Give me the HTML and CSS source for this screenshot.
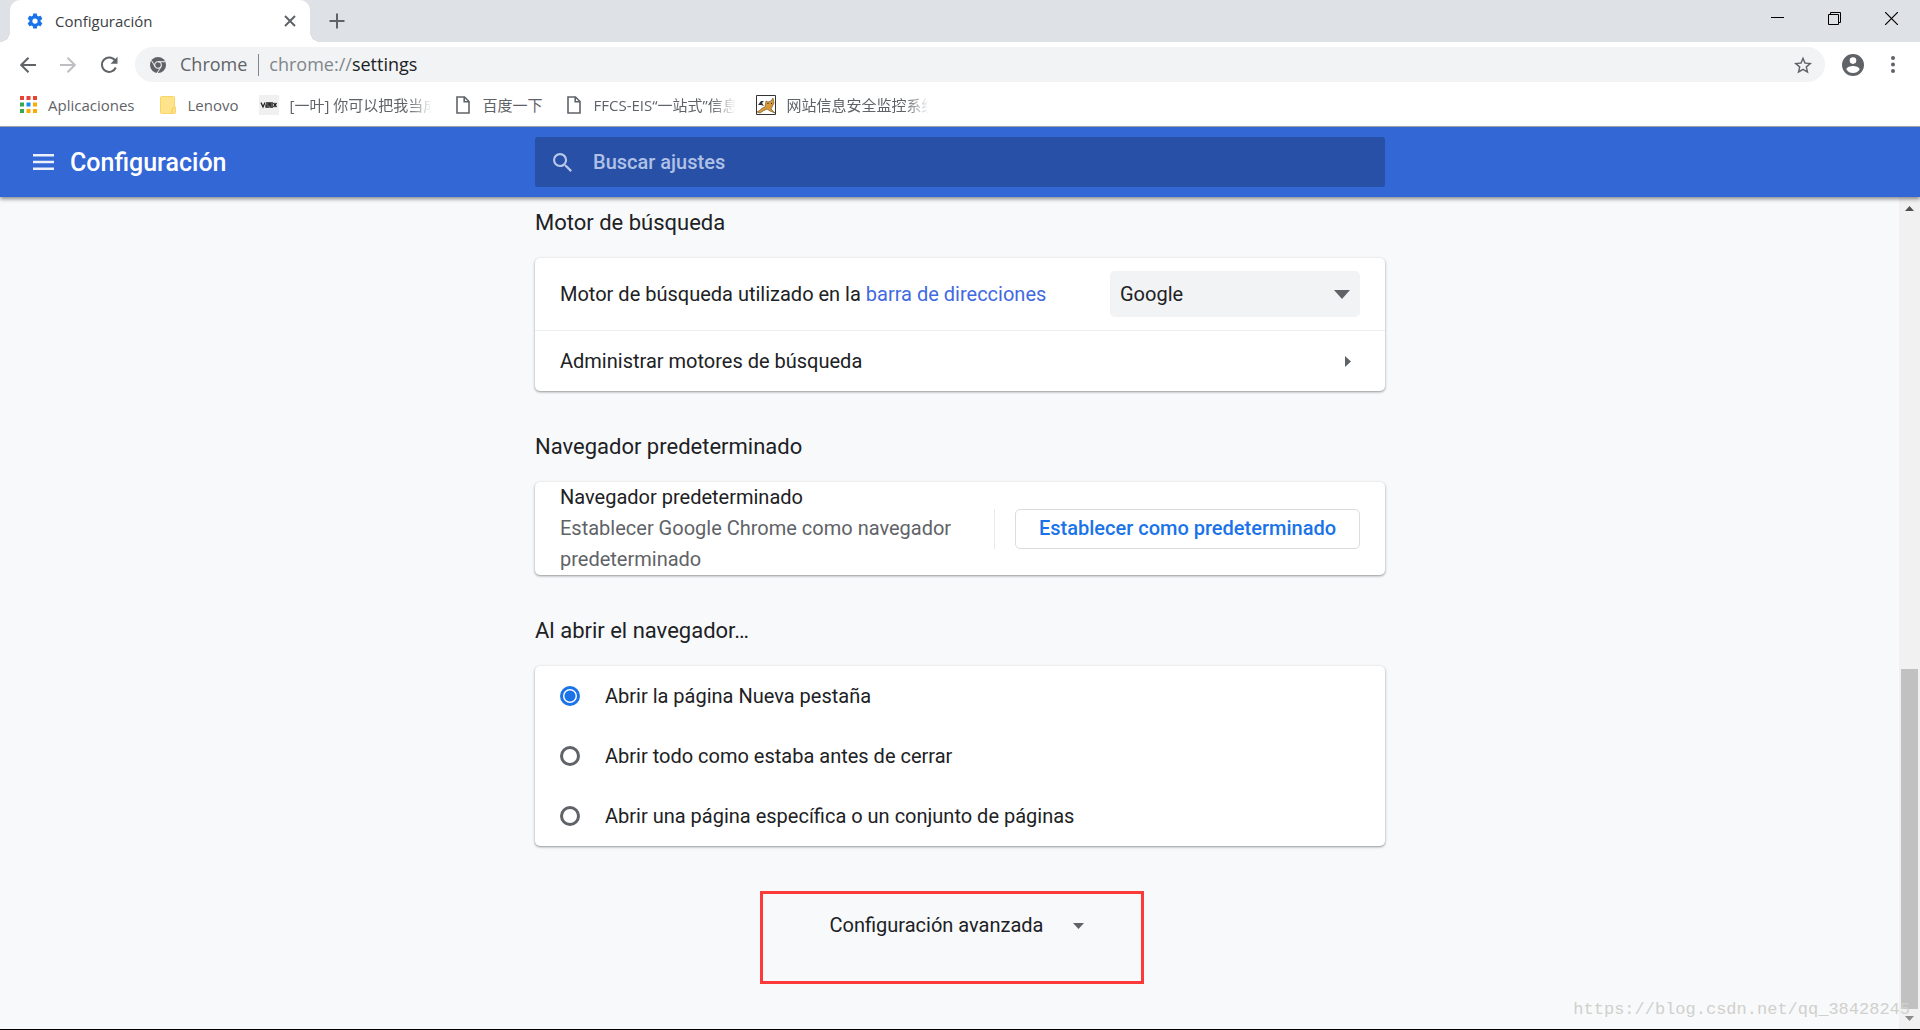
FILE: index.html
```html
<!DOCTYPE html>
<html lang="es">
<head>
<meta charset="utf-8">
<title>Configuración</title>
<link rel="stylesheet" href="styles.css">
</head>
<body>
<header class="browser">
  <div class="tabstrip">
    <div class="tab">
      <svg class="tab-icon" viewBox="0 0 24 24" fill="#1a73e8"><path d="M19.43 12.98c.04-.32.07-.64.07-.98s-.03-.66-.07-.98l2.11-1.65c.19-.15.24-.42.12-.64l-2-3.46c-.12-.22-.39-.3-.61-.22l-2.49 1c-.52-.4-1.08-.73-1.69-.98l-.38-2.65A.488.488 0 0 0 14 2h-4c-.25 0-.46.18-.49.42l-.38 2.65c-.61.25-1.17.59-1.69.98l-2.49-1c-.23-.09-.49 0-.61.22l-2 3.46c-.13.22-.07.49.12.64l2.11 1.65c-.04.32-.07.65-.07.98s.03.66.07.98l-2.11 1.65c-.19.15-.24.42-.12.64l2 3.46c.12.22.39.3.61.22l2.49-1c.52.4 1.08.73 1.69.98l.38 2.65c.03.24.24.42.49.42h4c.25 0 .46-.18.49-.42l.38-2.65c.61-.25 1.17-.59 1.69-.98l2.49 1c.23.09.49 0 .61-.22l2-3.46c.12-.22.07-.49-.12-.64l-2.11-1.65zM12 15.500a3.500 3.500 0 1 1 0-7 3.500 3.500 0 0 1 0 7z"/></svg>
      <span class="tab-title">Configuración</span>
      <button class="icon-button tab-close" aria-label="Cerrar pestaña"><svg width="12" height="12" viewBox="0 0 12 12" stroke="#5f6368" stroke-width="2"><path d="M1 1l10 10M11 1L1 11"/></svg></button>
    </div>
    <button class="icon-button new-tab" aria-label="Nueva pestaña"><svg width="16" height="16" viewBox="0 0 16 16" stroke="#5f6368" stroke-width="2"><path d="M8 0.500v15M0.500 8h15"/></svg></button>
    <div class="window-buttons">
      <button class="icon-button" aria-label="Minimizar"><svg width="13" height="13" viewBox="0 0 13 13"><path d="M0 5h13v1H0z"/></svg></button>
      <button class="icon-button" aria-label="Restaurar"><svg width="13" height="13" viewBox="0 0 13 13" fill="none" stroke="#000"><path d="M.5 2.500h10v10H.5zM2.500 2.500v-2h10v10h-2"/></svg></button>
      <button class="icon-button" aria-label="Cerrar"><svg width="13" height="13" viewBox="0 0 13 13" stroke="#000" stroke-width="1.200"><path d="M0 0l13 13M13 0L0 13"/></svg></button>
    </div>
  </div>
  <div class="toolbar">
    <nav class="nav-buttons">
      <button class="icon-button" aria-label="Atrás"><svg width="16" height="16" viewBox="0 0 16 16" fill="none" stroke="#5f6368" stroke-width="2"><path d="M16 8H1.500M8.500 .7L1.200 8l7.300 7.300"/></svg></button>
      <button class="icon-button" aria-label="Adelante"><svg width="16" height="16" viewBox="0 0 16 16" fill="none" stroke="#bdbfc2" stroke-width="2"><path d="M0 8h14.500M7.500 .7L14.800 8l-7.300 7.300"/></svg></button>
      <button class="icon-button" aria-label="Recargar"><svg width="18" height="18" viewBox="0 0 18 18"><path d="M15.300 5A7.200 7.200 0 1 0 15.800 11.500" fill="none" stroke="#5f6368" stroke-width="2"/><path d="M17.500 .8v7h-7z" fill="#5f6368"/></svg></button>
    </nav>
    <div class="omnibox">
      <svg class="chrome-logo" viewBox="0 0 16 16"><circle cx="8" cy="8" r="8" fill="#5f6368"/><g fill="none" stroke="#f1f3f4"><circle cx="8" cy="8" r="3.300" stroke-width="1.100"/><path d="M8 4.700h7.300M5.100 9.700L1.500 3.500M10.900 9.700L7.300 16"/></g></svg>
      <span class="site">Chrome</span>
      <span class="url">chrome://<b>settings</b></span>
      <button class="icon-button star" aria-label="Añadir a marcadores"><svg width="18" height="18" viewBox="2 2 20 19" fill="#5f6368"><path d="M22 9.240l-7.190-.62L12 2 9.190 8.630 2 9.240l5.460 4.730L5.820 21 12 17.270 18.180 21l-1.630-7.030L22 9.240zM12 15.400l-3.760 2.270 1-4.280-3.320-2.880 4.380-.38L12 6.100l1.710 4.040 4.380.38-3.320 2.880 1 4.280L12 15.400z"/></svg></button>
    </div>
    <button class="icon-button" aria-label="Perfil"><svg width="22" height="22" viewBox="2 2 20 20" fill="#5f6368"><path d="M12 2a10 10 0 1 0 0 20 10 10 0 0 0 0-20zm0 3a3 3 0 1 1 0 6 3 3 0 0 1 0-6zm0 14.200a7.200 7.200 0 0 1-6-3.220c.03-1.990 4-3.080 6-3.080s5.970 1.090 6 3.080a7.200 7.200 0 0 1-6 3.220z"/></svg></button>
    <button class="icon-button menu" aria-label="Menú"><svg width="4" height="17" viewBox="0 0 4 17" fill="#5f6368"><circle cx="2" cy="2" r="2"/><circle cx="2" cy="8.500" r="2"/><circle cx="2" cy="15" r="2"/></svg></button>
  </div>
  <nav class="bookmarks">
    <a href="#"><svg width="17" height="17" viewBox="0 0 17 17"><path fill="#ea4335" d="M0 0h4v4H0zM6.500 0h4v4h-4zM13 0h4v4h-4z"/><path fill="#34a853" d="M0 6.500h4v4H0zM0 13h4v4H0z"/><path fill="#1a8cf0" d="M6.500 6.500h4v4h-4z"/><path fill="#fbab05" d="M13 6.500h4v4h-4zM6.500 13h4v4h-4zM13 13h4v4h-4z"/></svg><span>Aplicaciones</span></a>
    <a href="#" class="folder"><svg width="16" height="18" viewBox="0 0 16 18"><path d="M.5 1.500q0-1 1-1h12q1 0 1 1v9.500h1v5.500q0 1-1 1h-13q-1 0-1-1z" fill="#fee38a" stroke="#f7d568"/><path d="M12 17v-4l2.500-2" fill="none" stroke="#f2c94c"/></svg><span>Lenovo</span></a>
    <a href="#"><svg width="20" height="20" viewBox="0 0 20 20"><path fill="#f0f0f0" d="M0 0h20v20H0z"/><path d="M2 7.500l2 4.500 2-4.500M7 8h3v2H7v2h3M14 8h-3v4h3M11 10h3M14.500 8l3 4M17.500 8l-3 4" fill="none" stroke="#222" stroke-width="1.300"/></svg><span class="faded">[一叶] 你可以把我当成</span></a>
    <a href="#" class="doc"><svg width="14" height="18" viewBox="0 0 14 18" fill="none" stroke="#5f6368" stroke-width="1.600"><path d="M1 1h7.500L13 5.500V17H1zM8.200 1v4.800H13"/></svg><span>百度一下</span></a>
    <a href="#" class="doc"><svg width="14" height="18" viewBox="0 0 14 18" fill="none" stroke="#5f6368" stroke-width="1.600"><path d="M1 1h7.500L13 5.500V17H1zM8.200 1v4.800H13"/></svg><span class="faded">FFCS-EIS“一站式”信息</span></a>
    <a href="#"><svg width="20" height="20" viewBox="0 0 20 20"><path fill="#fff" stroke="#333" d="M.5.500h19v19H.5z"/><path d="M1 17c3-1 4-4 8-5l1-6 2 1 3-1 2-3 1 5-2 4-1 2 4 4-5-2-3-2-4 2-3 2z" fill="#d69a3a" stroke="#6b4a1c" stroke-width=".6"/><path d="M2 10l3-4 3 0-2 2 2 3-3-1z" fill="#333"/><path d="M11.500 8.500h1M15 8.500h1" stroke="#222"/></svg><span class="faded">网站信息安全监控系统</span></a>
  </nav>
</header>

<header class="appbar">
  <div class="brand">
    <button class="icon-button" aria-label="Menú principal"><svg width="21" height="16" viewBox="0 0 21 16" fill="#fff" fill-opacity=".9"><path d="M0 0h21v2.500H0zM0 6.800h21v2.500H0zM0 13.500h21v2.500H0z"/></svg></button>
    <h1>Configuración</h1>
  </div>
  <label class="search">
    <svg width="19" height="19" viewBox="3 3 17.500 17.500" fill="#b9c8ea"><path d="M15.500 14h-.79l-.28-.27A6.471 6.471 0 0 0 16 9.500 6.500 6.500 0 1 0 9.500 16c1.610 0 3.090-.59 4.230-1.570l.27.28v.79l5 4.990L20.490 19l-4.990-5zm-6 0C7.010 14 5 11.990 5 9.500S7.010 5 9.500 5 14 7.010 14 9.500 11.990 14 9.500 14z"/></svg>
    <input type="search" placeholder="Buscar ajustes" aria-label="Buscar ajustes">
  </label>
</header>

<div class="viewport">
  <main class="content">
    <section>
      <h2>Motor de búsqueda</h2>
      <div class="card">
        <div class="row engine">
          <label for="engine">Motor de búsqueda utilizado en la <a href="#">barra de direcciones</a></label>
          <div class="select">
            <select id="engine"><option>Google</option></select>
            <svg width="16" height="9" viewBox="0 0 16 9" fill="#5f6368"><path d="M0 0h16L8 9z"/></svg>
          </div>
        </div>
        <div class="row manage">
          <span>Administrar motores de búsqueda</span>
          <button class="icon-button" aria-label="Administrar motores de búsqueda"><svg width="6" height="11" viewBox="0 0 6 11" fill="#5f6368"><path d="M0 0l6 5.500L0 11z"/></svg></button>
        </div>
      </div>
    </section>
    <section>
      <h2>Navegador predeterminado</h2>
      <div class="card">
        <div class="row default">
          <p>Navegador predeterminado<br><span class="secondary">Establecer Google Chrome como navegador predeterminado</span></p>
          <div class="action"><button class="outlined">Establecer como predeterminado</button></div>
        </div>
      </div>
    </section>
    <section>
      <h2>Al abrir el navegador…</h2>
      <div class="card">
        <label class="row option"><input type="radio" name="startup" checked><span>Abrir la página Nueva pestaña</span></label>
        <label class="row option"><input type="radio" name="startup"><span>Abrir todo como estaba antes de cerrar</span></label>
        <label class="row option"><input type="radio" name="startup"><span>Abrir una página específica o un conjunto de páginas</span></label>
      </div>
    </section>
    <div class="highlight">
      <button class="advanced">Configuración avanzada <svg width="11" height="6" viewBox="0 0 11 6" fill="#5f6368"><path d="M0 0h11L5.500 6z"/></svg></button>
    </div>
  </main>
  <div class="scrollbar">
    <svg width="9" height="5" viewBox="0 0 9 5" fill="#505050"><path d="M0 5h9L4.500 0z"/></svg>
    <div class="track"><div class="thumb"></div></div>
    <svg width="9" height="5" viewBox="0 0 9 5" fill="#8b8b8b"><path d="M0 0h9L4.500 5z"/></svg>
  </div>
  <span class="watermark">https://blog.csdn.net/qq_38428245</span>
</div>
</body>
</html>
```
FILE: styles.css
```css
* { box-sizing: border-box; }

body {
  margin: 0;
  min-height: 100vh;
  display: flex;
  flex-direction: column;
  background: #f8f9fb;
  border-bottom: 1px solid #000;
  color: #202124;
  font: 20px/31px Roboto, sans-serif;
}

button, input, select { font: inherit; color: inherit; }
svg { display: block; flex: none; }
a { text-decoration: none; }
h1, h2, p { margin: 0; font-weight: 400; }

.icon-button {
  display: flex;
  align-items: center;
  justify-content: center;
  padding: 0;
  border: 0;
  background: none;
}

/* Browser frame */
.browser {
  background: #fff;
  border-bottom: 1px solid #a9abb0;
  font-family: "Open Sans", "Noto Sans CJK SC", sans-serif;
}

.tabstrip {
  display: flex;
  height: 42px;
  padding-left: 10px;
  background: #dee1e6;
}

.tab {
  position: relative;
  display: flex;
  align-items: center;
  width: 300px;
  padding: 0 14px 0 16px;
  border-radius: 10px 10px 0 0;
  background: #fff;
}

.tab::before, .tab::after {
  content: "";
  position: absolute;
  bottom: 0;
  width: 10px;
  height: 10px;
}
.tab::before { right: 100%; background: radial-gradient(circle at 0 0, #dee1e6 10px, #fff 10px); }
.tab::after { left: 100%; background: radial-gradient(circle at 100% 0, #dee1e6 10px, #fff 10px); }

.tab-icon { width: 18px; height: 18px; }
.tab-title { flex: 1; margin-left: 11px; font-size: 15px; color: #3c4043; }
.new-tab { width: 54px; }

.window-buttons { display: flex; height: 37px; margin-left: auto; }
.window-buttons .icon-button { width: 57px; }

.toolbar {
  display: flex;
  align-items: center;
  height: 45px;
  padding: 0 23px 0 20px;
}
.nav-buttons { display: flex; gap: 24px; width: 115px; }

.omnibox {
  flex: 1;
  display: flex;
  align-items: center;
  height: 35px;
  margin-right: 17px;
  padding: 0 13px 0 15px;
  border-radius: 18px;
  background: #f1f3f4;
  font-size: 18px;
  line-height: 20px;
  color: #5f6368;
}
.chrome-logo { width: 16px; height: 16px; margin-right: 14px; }
.site, .url { padding-bottom: 2px; }
.site { padding-right: 11px; border-right: 1px solid #80868b; }
.url { padding-left: 10px; color: #80868b; }
.url b { font-weight: 400; color: #202124; }
.star { margin-left: auto; }
.menu { width: 8px; margin-left: 25px; }

.bookmarks {
  display: flex;
  align-items: center;
  gap: 20px;
  height: 39px;
  padding: 0 20px 4px;
}
.bookmarks a { display: flex; align-items: center; gap: 11px; font-size: 15px; line-height: 24px; color: #5f6368; }
.bookmarks .folder { gap: 12px; margin-left: 5px; }
.bookmarks .doc { gap: 13px; margin-left: 4px; }
.bookmarks span { white-space: nowrap; }
.bookmarks .faded {
  width: 142px;
  overflow: hidden;
  -webkit-mask-image: linear-gradient(to right, #000 118px, transparent);
  mask-image: linear-gradient(to right, #000 118px, transparent);
}

/* Settings header */
.appbar {
  z-index: 1;
  display: grid;
  grid-template-columns: 1fr minmax(0, 850px) 1fr;
  align-items: center;
  height: 70px;
  background: #3367d6;
  box-shadow: 0 2px 4px rgba(0, 0, 0, .45);
}
.brand { display: flex; align-items: center; gap: 16px; padding-left: 33px; color: #fff; }
.brand h1 { font-size: 25px; font-weight: 500; }

.search {
  display: flex;
  align-items: center;
  gap: 21px;
  height: 50px;
  padding: 0 18px;
  border-radius: 3px;
  background: #2850a7;
}
.search input { flex: 1; border: 0; padding: 0; background: none; outline: 0; color: #fff; font-weight: 500; }
.search input::placeholder { color: #b0c1e6; opacity: 1; }

/* Settings page */
.viewport {
  position: relative;
  flex: 1;
  display: grid;
  grid-template-columns: 21px minmax(0, 1fr) 21px;
}

.content {
  grid-column: 2;
  width: 100%;
  max-width: 850px;
  margin: 0 auto;
  padding: 10px 0 40px;
  display: flex;
  flex-direction: column;
  gap: 40px;
}

h2 { margin-bottom: 19px; font-size: 22px; line-height: 32px; }

.card {
  border-radius: 5px;
  background: #fff;
  box-shadow: 0 1px 3px rgba(60, 64, 67, .3), 0 1px 2px rgba(60, 64, 67, .3);
}

.row { display: flex; align-items: center; justify-content: space-between; padding: 0 25px; }
.engine { height: 72px; }
.engine a { color: #4169e1; }
.manage { height: 61px; padding-right: 34px; border-top: 1px solid #eceeef; }

.select { display: grid; width: 250px; align-items: center; }
.select > * { grid-area: 1 / 1; }
.select select {
  appearance: none;
  height: 46px;
  padding: 0 10px;
  border: 0;
  border-radius: 5px;
  background: #f1f3f4;
}
.select svg { justify-self: end; margin-right: 10px; pointer-events: none; }

.default { gap: 36px; }
.default p { flex: 1; }
.secondary { color: #5f6368; }
.action { padding-left: 20px; border-left: 1px solid #e8eaed; }
.outlined {
  display: block;
  height: 40px;
  width: 345px;
  padding: 0;
  border: 1px solid #dadce0;
  border-radius: 5px;
  background: #fff;
  color: #1a73e8;
  font-weight: 500;
}

.option { justify-content: flex-start; gap: 25px; height: 60px; }
.option input {
  appearance: none;
  width: 20px;
  height: 20px;
  margin: 0;
  border: 3px solid #5f6368;
  border-radius: 50%;
}
.option input:checked { border-color: #1a73e8; background: radial-gradient(#1a73e8 5px, #fff 6px); }

.highlight {
  width: 384px;
  height: 93px;
  margin: 5px 0 0 225px;
  padding-left: 10px;
  border: 3px solid #fc3a3a;
  display: flex;
  justify-content: center;
  align-items: flex-start;
}
.advanced { display: flex; align-items: center; gap: 30px; height: 63px; padding: 0; border: 0; background: none; }

.scrollbar {
  grid-column: 3;
  display: flex;
  flex-direction: column;
  align-items: center;
  padding: 9px 0 8px;
  background: #f1f1f1;
}
.track { flex: 1; display: flex; align-items: flex-end; margin: 7px 0; }
.thumb { width: 17px; height: 43%; background: #c1c1c1; }

.watermark {
  position: absolute;
  right: 10px;
  bottom: 4px;
  font: 17px/30px "Liberation Mono", monospace;
  color: #d0d0cc;
}
```
